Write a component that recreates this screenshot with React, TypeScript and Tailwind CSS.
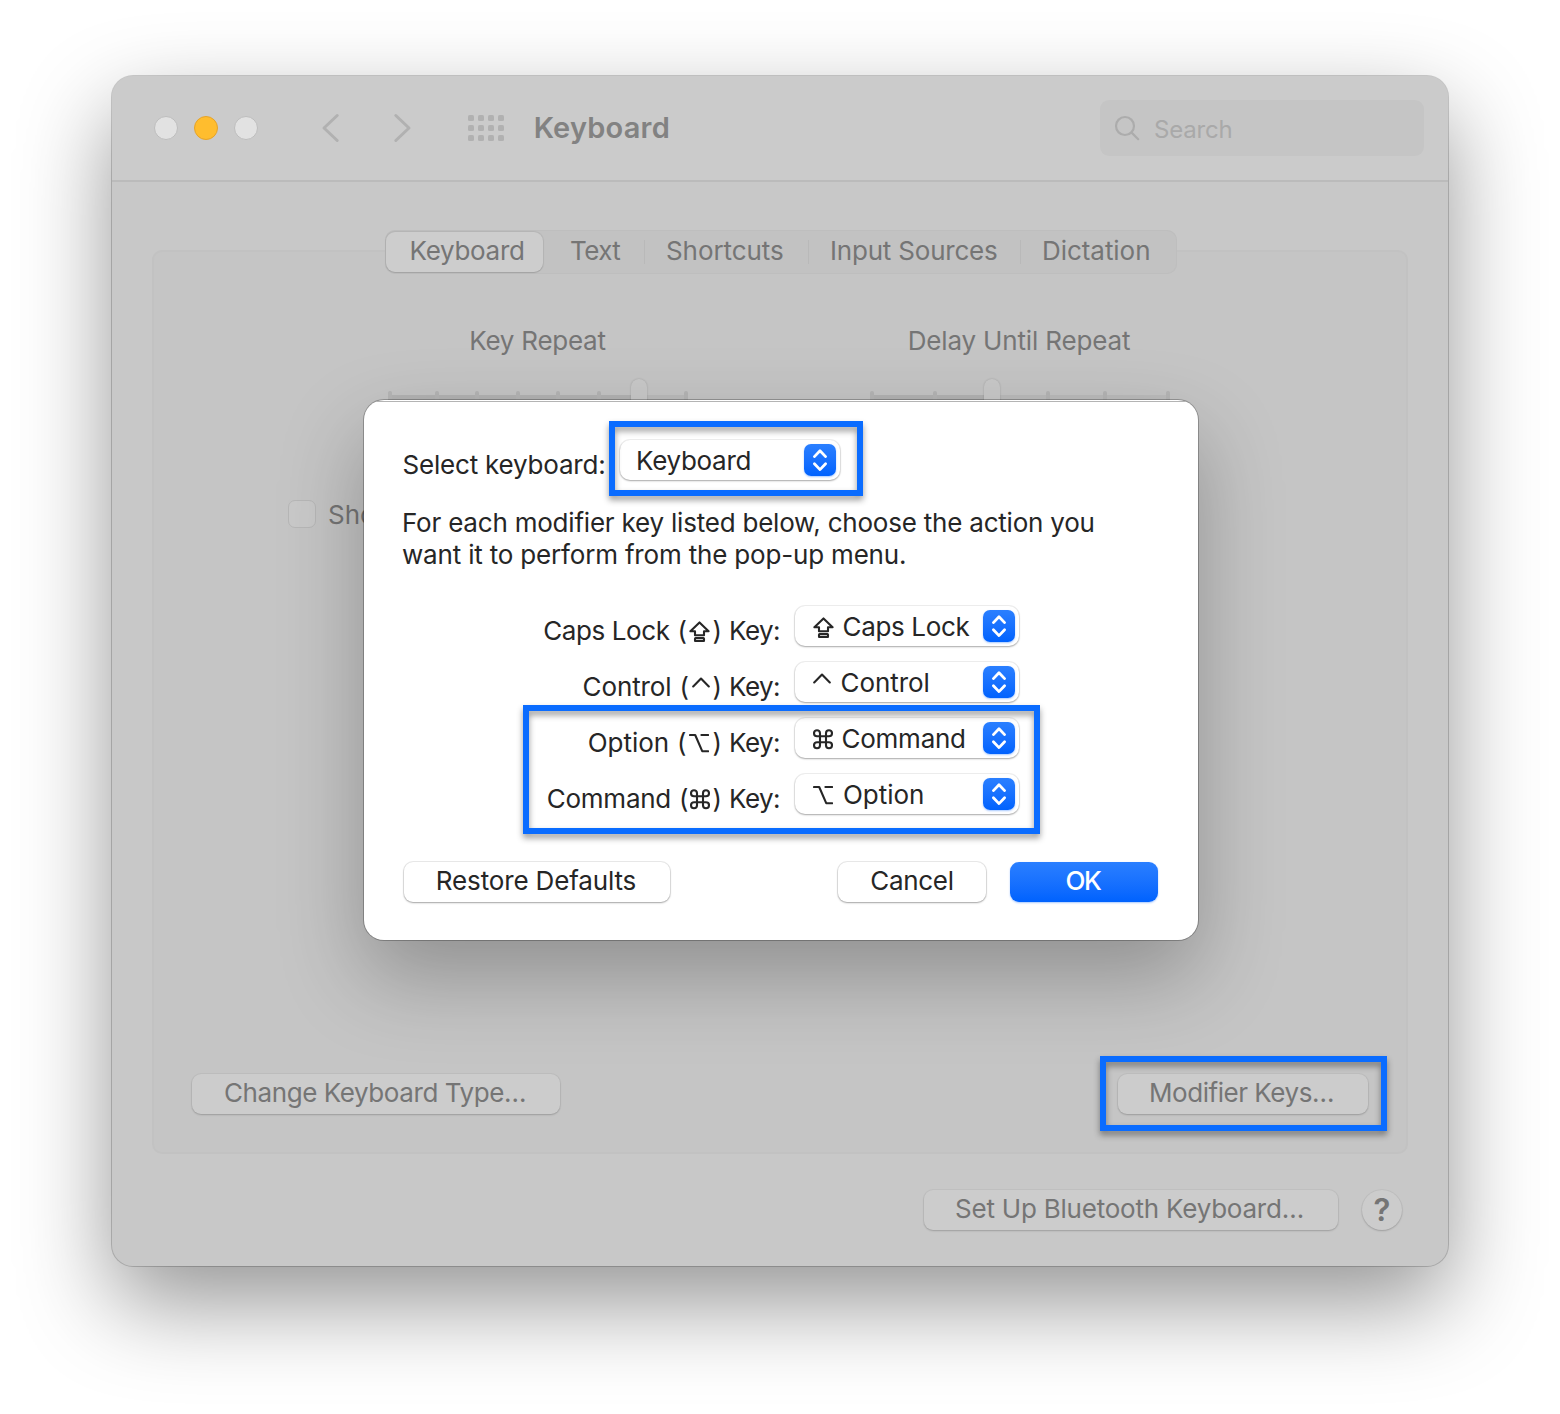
import React from "react";

type Glyph = "caps" | "control" | "option" | "command";

function KeyGlyph({ name, className = "" }: { name: Glyph; className?: string }) {
  const common = {
    fill: "none",
    stroke: "currentColor",
    strokeWidth: 2.1,
    strokeLinejoin: "round" as const,
    strokeLinecap: "round" as const,
    className: `shrink-0 ${className}`,
    height: 21,
  };
  if (name === "caps")
    return (
      <svg {...common} width="21" viewBox="0 0 21 21">
        <path d="M10.5 1.4 1.4 10.3H6V14.3H15V10.3H19.6Z" />
        <rect x="6" y="17.1" width="9" height="3" rx="0.6" />
      </svg>
    );
  if (name === "control")
    return (
      <svg {...common} width="18" viewBox="0 0 18 21">
        <path d="M1.2 9.4 9 1.6 16.8 9.4" />
      </svg>
    );
  if (name === "option")
    return (
      <svg {...common} width="20" viewBox="0 0 20 21">
        <path d="M1 2H6.2L13.2 18.2H19.2M12.4 2H19.2" />
      </svg>
    );
  return (
    <svg {...common} width="20" viewBox="0 0 20 21">
      <g transform="translate(-2 -1.8)">
        <path d="M15 6v12a3 3 0 1 0 3-3H6a3 3 0 1 0 3 3V6a3 3 0 1 0-3 3h12a3 3 0 1 0-3-3" />
      </g>
    </svg>
  );
}

function Stepper() {
  return (
    <span className="ml-auto flex size-8 shrink-0 items-center justify-center rounded-[7px] bg-gradient-to-b from-[#2a7fff] to-[#0062fe] shadow-[0_1px_2px_rgba(0,98,254,0.35)]">
      <svg width="32" height="32" viewBox="0 0 32 32" fill="none" stroke="#fff" strokeWidth="2.8" strokeLinecap="round" strokeLinejoin="round">
        <path d="M10.4 12.6 16 6.8l5.6 5.8M10.4 19.8 16 25.6l5.6-5.8" />
      </svg>
    </span>
  );
}

function Popup({ className, children }: { className: string; children: React.ReactNode }) {
  return (
    <button
      className={`flex h-10 shrink-0 items-center rounded-[10px] bg-white pr-1 whitespace-nowrap shadow-[0_0_0_1px_rgba(0,0,0,0.06),0_1px_2px_rgba(0,0,0,0.3)] ${className}`}
    >
      <span className="flex items-center pt-[2px]">{children}</span>
      <Stepper />
    </button>
  );
}

function ModifierRow({
  label,
  glyph,
  labelTracking,
  glyphGap,
  value,
  valueGlyph,
  valueGap,
  valueTracking,
}: {
  label: string;
  glyph: Glyph;
  labelTracking: string;
  glyphGap: string;
  value: string;
  valueGlyph: Glyph;
  valueGap: string;
  valueTracking: string;
}) {
  return (
    <div className="flex h-10 items-center">
      <div className="flex h-8 w-[417px] translate-y-[5px] items-center justify-end whitespace-nowrap">
        <span className={labelTracking}>{label}</span>
        <span className="ml-2">(</span>
        <KeyGlyph name={glyph} className={glyphGap} />
        <span>)</span>
        <span className="ml-[7px] w-[52px] tracking-[-0.55px]">Key:</span>
      </div>
      <Popup className="ml-[13.5px] w-[224px] pl-[18px]">
        <KeyGlyph name={valueGlyph} />
        <span className={`${valueGap} ${valueTracking}`}>{value}</span>
      </Popup>
    </div>
  );
}

function DimButton({ className, children }: { className: string; children: React.ReactNode }) {
  return (
    <button
      className={`flex h-10 items-center justify-center rounded-[9px] bg-[#cccccc] pb-[3px] whitespace-nowrap shadow-[0_0_0_1px_rgba(0,0,0,0.035),0_1px_2px_rgba(0,0,0,0.18)] ${className}`}
    >
      {children}
    </button>
  );
}

function Slider({ className, fill, knob, ticks }: { className: string; fill: string; knob: string; ticks: string[] }) {
  return (
    <div className={`relative h-10 w-[300px] ${className}`}>
      <div className="absolute inset-x-0 top-4 h-2 bg-[#bcbcbc]" />
      <div className={`absolute left-0 top-4 h-2 bg-[#b3b3b3] ${fill}`} />
      {ticks.map((t) => (
        <div key={t} className={`absolute top-3 h-4 w-1 rounded-full bg-[#b5b5b5] ${t}`} />
      ))}
      <div className={`absolute top-0 h-10 w-4 rounded-full bg-[#c9c9c9] shadow-[0_0_2px_rgba(0,0,0,0.2)] ${knob}`} />
    </div>
  );
}

function Highlight({ className }: { className: string }) {
  return (
    <div
      className={`pointer-events-none absolute z-20 border-[6px] border-[#0a6cff] drop-shadow-[0_4px_3px_rgba(0,0,0,0.4)] ${className}`}
    />
  );
}

function Toolbar() {
  return (
    <header className="flex h-[106px] shrink-0 items-center rounded-t-[21px] border-b-2 border-[#bbbbbb] bg-[#cbcbcb] pl-[42px] pr-[24px]">
      <div className="flex items-center gap-4">
        <span className="size-6 rounded-full border border-[#bdbdbd] bg-[#e2e2e2]" />
        <span className="size-6 rounded-full border border-[#e5a32a] bg-[#ffbd2e]" />
        <span className="size-6 rounded-full border border-[#bdbdbd] bg-[#e2e2e2]" />
      </div>
      <svg className="ml-[61.5px]" width="20" height="30" viewBox="0 0 20 30" fill="none" stroke="#b1b1b1" strokeWidth="3" strokeLinecap="round" strokeLinejoin="round">
        <path d="M17.2 2.5 4 15l13.2 12.5" />
      </svg>
      <svg className="ml-[52.5px]" width="20" height="30" viewBox="0 0 20 30" fill="none" stroke="#b1b1b1" strokeWidth="3" strokeLinecap="round" strokeLinejoin="round">
        <path d="M3.8 2.5 17 15 3.8 27.5" />
      </svg>
      <div className="ml-[56px] grid grid-cols-4 gap-x-[3.9px] gap-y-1">
        {Array.from({ length: 12 }, (_, i) => (
          <span key={i} className="size-[6px] rounded-[1.5px] bg-[#b1b1b1]" />
        ))}
      </div>
      <h1 className="ml-[30px] text-[29px] leading-8 font-semibold tracking-[0.2px] text-[#828282]">Keyboard</h1>
      <div className="ml-auto flex h-14 w-[324px] items-center rounded-[9px] bg-[#c5c5c5] pl-[14px]">
        <svg width="26" height="26" viewBox="0 0 26 26" fill="none" stroke="#acacac" strokeWidth="2.2" strokeLinecap="round">
          <circle cx="11" cy="11" r="9" />
          <path d="m17.6 17.6 6.6 6.6" />
        </svg>
        <span className="ml-[14px] pt-[3px] text-[24px] leading-8 tracking-[-0.2px] text-[#a9a9a9]">Search</span>
      </div>
    </header>
  );
}

function Tabs() {
  return (
    <nav className="relative z-10 -mt-[22px] ml-[233px] flex h-11 w-[792px] items-center rounded-[10px] bg-[#c2c2c2] pl-px leading-8 whitespace-nowrap shadow-[inset_0_0_0_1px_#bebebe]">
      <span className="flex h-10 w-[157px] items-center rounded-[9px] bg-[#cdcdcd] pb-[2px] pl-[23.5px] tracking-[-0.3px] shadow-[0_0_1px_1px_rgba(0,0,0,0.07),0_1px_1px_rgba(0,0,0,0.1)]">
        Keyboard
      </span>
      <span className="w-[101px] pb-[2px] pl-[27px] tracking-[-0.6px]">Text</span>
      <span className="h-6 w-px bg-[#b9b9b9]" />
      <span className="w-[163px] pb-[2px] pl-[21px] tracking-[-0.07px]">Shortcuts</span>
      <span className="h-6 w-px bg-[#b9b9b9]" />
      <span className="w-[211px] pb-[2px] pl-[21px] tracking-[-0.2px]">Input Sources</span>
      <span className="h-6 w-px bg-[#b9b9b9]" />
      <span className="pb-[2px] pl-[21px] tracking-[-0.05px]">Dictation</span>
    </nav>
  );
}

function ModifierSheet() {
  return (
    <section className="absolute left-[252px] top-[324px] z-10 flex h-[540px] w-[834px] flex-col rounded-[20px] bg-white pr-10 pl-[38px] text-[#262626] shadow-[0_0_0_1px_rgba(0,0,0,0.25),0_36px_84px_rgba(0,0,0,0.27)]">
      <div className="absolute inset-x-3 top-px h-px bg-[#b4b4b4]" />
      <div className="flex pt-10">
        <span className="w-[218px] pt-[9px] pl-[0.5px] leading-8 tracking-[-0.2px]">Select keyboard:</span>
        <Popup className="w-[220px] pl-4">
          <span className="tracking-[-0.3px]">Keyboard</span>
        </Popup>
      </div>
      <p className="mt-[26px] leading-8 whitespace-nowrap">
        <span className="block tracking-[-0.21px]">For each modifier key listed below, choose the action you</span>
        <span className="block tracking-[-0.18px]">want it to perform from the pop-up menu.</span>
      </p>
      <div className="mt-[35px] -ml-[38px] flex flex-col gap-4 leading-8">
        <ModifierRow label="Caps Lock" labelTracking="tracking-[-0.4px]" glyph="caps" glyphGap="ml-[2px] mr-[2.5px]" value="Caps Lock" valueGlyph="caps" valueGap="ml-[9px]" valueTracking="tracking-[-0.35px]" />
        <ModifierRow label="Control" labelTracking="tracking-[-0.1px]" glyph="control" glyphGap="ml-[2.5px] mr-[3px]" value="Control" valueGlyph="control" valueGap="ml-[10px]" valueTracking="tracking-[-0.07px]" />
        <ModifierRow label="Option" labelTracking="tracking-[-0.05px]" glyph="option" glyphGap="ml-[2.5px] mr-[3.5px]" value="Command" valueGlyph="command" valueGap="ml-[9px]" valueTracking="tracking-[-0.25px]" />
        <ModifierRow label="Command" labelTracking="tracking-[-0.25px]" glyph="command" glyphGap="ml-[1.5px] mr-[2.5px]" value="Option" valueGlyph="option" valueGap="ml-[10.5px]" valueTracking="tracking-[-0.05px]" />
      </div>
      <div className="mt-12 ml-[2px] flex leading-8">
        <button className="flex h-10 w-[266px] items-center justify-center rounded-[9px] bg-white pr-[2px] pb-[3px] tracking-[-0.15px] shadow-[0_0_0_1px_rgba(0,0,0,0.08),0_1px_2px_rgba(0,0,0,0.3)]">
          Restore Defaults
        </button>
        <button className="ml-auto flex h-10 w-[148px] items-center justify-center rounded-[9px] bg-white pb-[3px] tracking-[-0.3px] shadow-[0_0_0_1px_rgba(0,0,0,0.08),0_1px_2px_rgba(0,0,0,0.3)]">
          Cancel
        </button>
        <button className="ml-6 flex h-10 w-[148px] items-center justify-center rounded-[9px] bg-gradient-to-b from-[#2a7fff] to-[#0062fe] pr-[2px] pb-[3px] font-medium tracking-[-1.3px] text-white shadow-[0_1px_2px_rgba(0,98,254,0.35)]">
          OK
        </button>
      </div>
    </section>
  );
}

export default function App() {
  return (
    <div className="h-[1414px] w-[1560px] overflow-hidden bg-white pt-[76px] pl-[112px] font-['Inter',sans-serif] text-[26px]">
      <main className="relative flex h-[1190px] w-[1336px] flex-col rounded-[21px] bg-[#c8c8c8] leading-8 text-[#757575] shadow-[0_0_0_1px_rgba(0,0,0,0.18),0_37px_92px_rgba(0,0,0,0.42)]">
        <Toolbar />
        <div className="mx-10 mt-[68px] flex h-[904px] flex-col rounded-[10px] border-2 border-[#c2c2c2] bg-[#c5c5c5]">
          <div className="-ml-[2px] flex">
            <Tabs />
          </div>
          <div className="mt-[51px] flex">
            <div className="ml-[234px] w-[299px] text-center tracking-[-0.25px]">Key Repeat</div>
            <div className="ml-[182px] w-[300px] text-center tracking-[-0.15px]">Delay Until Repeat</div>
          </div>
          <div className="mt-[22px] flex">
            <Slider
              className="ml-[234px]"
              fill="w-[250px]"
              knob="left-[243px]"
              ticks={["left-0", "left-[47px]", "left-[87px]", "left-[128px]", "left-[168px]", "left-[209px]", "left-[296px]"]}
            />
            <Slider
              className="ml-[182px]"
              fill="w-[120px]"
              knob="left-[114px]"
              ticks={["left-0", "left-[63px]", "left-[176px]", "left-[233px]", "left-[296px]"]}
            />
          </div>
          <label className="mt-[80px] ml-[134px] flex items-center">
            <span className="mb-[2px] size-7 rounded-[7px] border-[1.5px] border-[#b7b7b7] bg-[#c9c9c9]" />
            <span className="ml-[12px]">Show</span>
          </label>
          <div className="mt-auto mb-[38px] flex justify-between pr-[38px] pl-[38px]">
            <DimButton className="w-[368px] pr-[2px] tracking-[-0.42px]">Change Keyboard Type…</DimButton>
            <DimButton className="w-[250px] pr-[3px] tracking-[-0.47px]">Modifier Keys…</DimButton>
          </div>
        </div>
        <div className="mt-9 flex justify-end pr-[46px]">
          <DimButton className="w-[414px] pr-[3px] tracking-[-0.22px]">Set Up Bluetooth Keyboard…</DimButton>
          <DimButton className="ml-6 w-10 rounded-full! text-[31px] font-semibold pb-px!">?</DimButton>
        </div>
        <ModifierSheet />
        <Highlight className="left-[497px] top-[345px] h-[75px] w-[254px]" />
        <Highlight className="left-[411px] top-[629px] h-[129px] w-[517px]" />
        <Highlight className="left-[988px] top-[980px] h-[75px] w-[287px]" />
      </main>
    </div>
  );
}
